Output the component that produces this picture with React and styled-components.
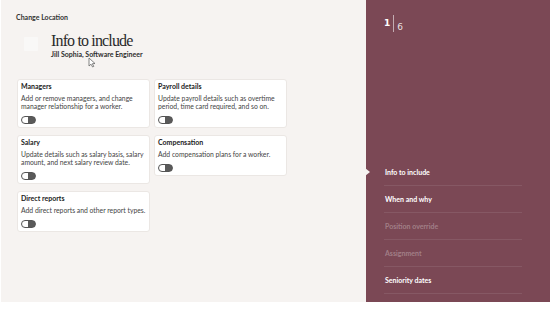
import React from "react";
import styled, { createGlobalStyle } from "styled-components";

const Global = createGlobalStyle`
  html, body { margin: 0; padding: 0; background: #ffffff; }
  body { font-family: Lato, "Noto Sans", sans-serif; }
  * { box-sizing: border-box; }
`;

const Page = styled.div`
  width: 550px;
  height: 302px;
  display: flex;
  padding-left: 1px;
  background: #ffffff;
`;

const Main = styled.div`
  flex: 0 0 365px;
  background: #f6f3f1;
  padding: 13px 0 0 15px;
  display: flex;
  flex-direction: column;
  position: relative;
`;

const Crumb = styled.div`
  font-size: 7px;
  line-height: 9px;
  font-weight: 700;
  color: #333;
`;

const Header = styled.div`
  display: flex;
  align-items: flex-start;
  gap: 13px;
  margin: 10px 0 0 8px;
`;

const Avatar = styled.div`
  width: 14px;
  height: 14px;
  margin-top: 5px;
  background: #f9f8f7;
  border-radius: 1px;
`;

const HeadText = styled.div`
  display: flex;
  flex-direction: column;
`;

const Title = styled.h1`
  margin: 0;
  font-family: "Liberation Serif", "DejaVu Serif", serif;
  font-weight: 400;
  font-size: 16px;
  line-height: 17px;
  letter-spacing: -0.85px;
  color: #2a2a2a;
`;

const Sub = styled.div`
  margin-top: 1px;
  font-size: 7px;
  line-height: 9px;
  font-weight: 700;
  color: #2e2e2e;
`;

const Grid = styled.div`
  display: grid;
  grid-template-columns: 133px 133px;
  column-gap: 4px;
  row-gap: 7px;
  align-items: start;
  margin: 20px 0 0 1px;
`;

const Card = styled.div`
  background: #ffffff;
  border: 1px solid #ebe7e4;
  border-radius: 3px;
  padding: 2px 1px 3px 3px;
  display: flex;
  flex-direction: column;
`;

const CardTitle = styled.div`
  font-size: 7px;
  line-height: 9px;
  font-weight: 700;
  color: #222;
`;

const CardDesc = styled.div`
  margin-top: 3px;
  font-size: 6.8px;
  line-height: 8px;
  color: #444;
`;

const Toggle = styled.div`
  margin-top: 6px;
  width: 15px;
  height: 8px;
  border-radius: 4px;
  border: 1px solid #555;
  background: linear-gradient(to right, #ffffff 45%, #5a5a5a 45%);
`;

const Cursor = styled.svg`
  position: absolute;
  left: 87px;
  top: 57px;
`;

const Panel = styled.div`
  flex: 1;
  background: #7b4855;
  padding: 15px 28px 8px 18px;
  display: flex;
  flex-direction: column;
`;

const Counter = styled.div`
  display: flex;
  align-items: flex-start;
  height: 18px;
  color: #fff;
  font-family: "DejaVu Sans", sans-serif;
`;

const Cur = styled.span`
  font-size: 9px;
  font-weight: 700;
  line-height: 9px;
  margin-top: 4px;
`;

const Bar = styled.span`
  width: 1px;
  height: 17px;
  background: rgba(255, 255, 255, 0.55);
  margin: 0 3px 0 3px;
`;

const Total = styled.span`
  font-size: 9px;
  line-height: 9px;
  margin-top: 8px;
  color: rgba(255, 255, 255, 0.85);
`;

const Nav = styled.ul`
  list-style: none;
  margin: auto 0 0 0;
  padding: 0;
`;

const NavItem = styled.li`
  position: relative;
  padding: 9px 0 8px 1px;
  font-size: 7px;
  line-height: 9px;
  font-weight: 700;
  color: ${(p) => (p.$muted ? "rgba(255,255,255,0.3)" : "#ffffff")};
  border-bottom: 1px solid rgba(255, 255, 255, 0.09);
  ${(p) =>
    p.$active &&
    `
    &::before {
      content: "";
      position: absolute;
      left: -19px;
      top: 9px;
      border-top: 4px solid transparent;
      border-bottom: 4px solid transparent;
      border-left: 5px solid #f6f3f1;
    }
  `}
`;

const cards = [
  { t: "Managers", d: "Add or remove managers, and change manager relationship for a worker." },
  { t: "Payroll details", d: "Update payroll details such as overtime period, time card required, and so on." },
  { t: "Salary", d: "Update details such as salary basis, salary amount, and next salary review date." },
  { t: "Compensation", d: "Add compensation plans for a worker." },
  { t: "Direct reports", d: "Add direct reports and other report types." },
];

const steps = [
  { l: "Info to include", active: true },
  { l: "When and why" },
  { l: "Position override", muted: true },
  { l: "Assignment", muted: true },
  { l: "Seniority dates" },
];

export default function App() {
  return (
    <>
      <Global />
      <Page>
        <Main>
          <Crumb>Change Location</Crumb>
          <Header>
            <Avatar />
            <HeadText>
              <Title>Info to include</Title>
              <Sub>Jill Sophia, Software Engineer</Sub>
            </HeadText>
          </Header>
          <Grid>
            {cards.map((c) => (
              <Card key={c.t}>
                <CardTitle>{c.t}</CardTitle>
                <CardDesc>{c.d}</CardDesc>
                <Toggle />
              </Card>
            ))}
          </Grid>
          <Cursor width="9" height="11" viewBox="0 0 9 11">
            <path d="M1 1 L1 9 L3 7.2 L4.6 10 L5.8 9.4 L4.3 6.7 L7 6.5 Z" fill="#fff" stroke="#666" strokeWidth="0.8" strokeLinejoin="round" />
          </Cursor>
        </Main>
        <Panel>
          <Counter>
            <Cur>1</Cur>
            <Bar />
            <Total>6</Total>
          </Counter>
          <Nav>
            {steps.map((s) => (
              <NavItem key={s.l} $active={s.active} $muted={s.muted}>
                {s.l}
              </NavItem>
            ))}
          </Nav>
        </Panel>
      </Page>
    </>
  );
}
